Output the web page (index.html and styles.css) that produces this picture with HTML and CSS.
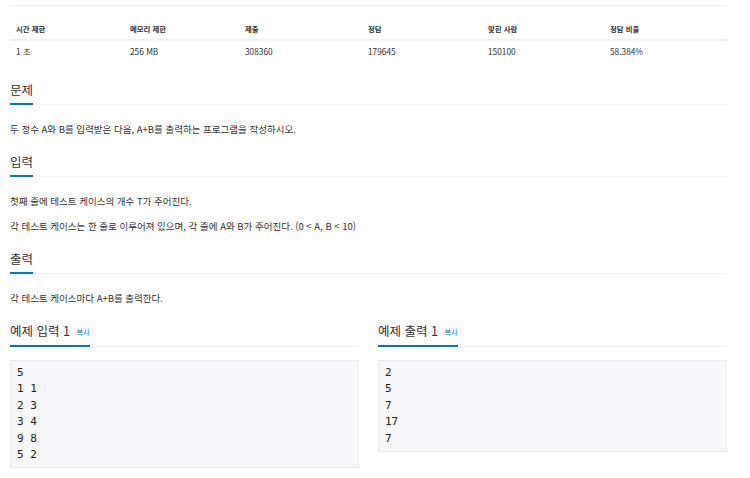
FILE: index.html
```html
<!DOCTYPE html>
<html lang="ko">
<head>
    <meta charset="UTF-8">
    <meta name="viewport" content="width=device-width, initial-scale=1.0">
    <title>A+B - 문제</title>
    <link rel="stylesheet" href="styles.css">
</head>
<body>

<div class="page">
    <div class="top-rule"></div>

    <table class="problem-info">
        <thead>
            <tr>
                <th class="col-time">시간 제한</th>
                <th class="col-memory">메모리 제한</th>
                <th class="col-submit">제출</th>
                <th class="col-accepted">정답</th>
                <th class="col-users">맞힌 사람</th>
                <th class="col-ratio">정답 비율</th>
            </tr>
        </thead>
        <tbody>
            <tr>
                <td>1 초</td>
                <td>256 MB</td>
                <td>308360</td>
                <td>179645</td>
                <td>150100</td>
                <td>58.384%</td>
            </tr>
        </tbody>
    </table>

    <section class="problem-section">
        <div class="headline"><h2>문제</h2></div>
        <div class="problem-text">
            <p>두 정수 A와 B를 입력받은 다음, A+B를 출력하는 프로그램을 작성하시오.</p>
        </div>
    </section>

    <section class="problem-section">
        <div class="headline"><h2>입력</h2></div>
        <div class="problem-text">
            <p>첫째 줄에 테스트 케이스의 개수 T가 주어진다.</p>
            <p>각 테스트 케이스는 한 줄로 이루어져 있으며, 각 줄에 A와 B가 주어진다. (0 &lt; A, B &lt; 10)</p>
        </div>
    </section>

    <section class="problem-section">
        <div class="headline"><h2>출력</h2></div>
        <div class="problem-text">
            <p>각 테스트 케이스마다 A+B를 출력한다.</p>
        </div>
    </section>

    <div class="samples">
        <section class="sample">
            <div class="headline"><h2>예제 입력 1 <a href="#" class="copy-button">복사</a></h2></div>
            <pre class="sampledata">5
1 1
2 3
3 4
9 8
5 2</pre>
        </section>
        <section class="sample">
            <div class="headline"><h2>예제 출력 1 <a href="#" class="copy-button">복사</a></h2></div>
            <pre class="sampledata">2
5
7
17
7</pre>
        </section>
    </div>
</div>

</body>
</html>
```

FILE: styles.css
```css
body {
    margin: 0;
    font-family: "Noto Sans CJK KR", "Noto Sans", sans-serif;
    color: #333;
    background: #fff;
}
.page {
    width: 717px;
    margin-left: 10px;
    padding-top: 5px;
}
.top-rule {
    border-top: 1px solid #f2f2f2;
}

/* 문제 정보 표 */
.problem-info {
    width: 717px;
    border-collapse: collapse;
    table-layout: fixed;
    margin-top: 12px;
}
.problem-info th {
    font-size: 7.4px;
    font-weight: bold;
    line-height: 12px;
    text-align: left;
    padding: 5px 6px 4px;
    border-bottom: 2px solid #f0f0f0;
}
.problem-info td {
    font-size: 8.3px;
    line-height: 12px;
    padding: 4px 6px 6px;
}
.col-time { width: 102px; }
.col-memory { width: 103px; }
.col-submit { width: 111px; }
.col-accepted { width: 108px; }
.col-users { width: 110px; }
.col-ratio { width: 111px; }

/* 섹션 제목 */
.headline {
    display: flex;
    border-bottom: 1px solid #f2f2f2;
}
.headline h2 {
    margin: 0 0 -1px;
    font-size: 12.5px;
    font-weight: normal;
    line-height: 16px;
    padding-bottom: 5px;
    border-bottom: 2px solid #0076c0;
}
.copy-button {
    font-size: 7.2px;
    color: #0076c0;
    text-decoration: none;
    margin-left: 3px;
    vertical-align: 1px;
}

.problem-section {
    margin-bottom: 17px;
}
.problem-section:first-of-type {
    margin-top: 19px;
}
.problem-text {
    margin-top: 17px;
}
.problem-text p {
    margin: 0;
    font-size: 9.5px;
    line-height: 15px;
}
.problem-text p + p {
    margin-top: 10px;
}

/* 예제 */
.samples {
    display: grid;
    grid-template-columns: 349px 349px;
    column-gap: 19px;
    align-items: start;
}
.sampledata {
    margin: 13px 0 0;
    padding: 4px 6px;
    background-color: #f7f7f9;
    border: 1px solid #ececf0;
    font-family: "DejaVu Sans Mono", monospace;
    font-size: 11px;
    line-height: 16.4px;
    color: #222;
}
```
